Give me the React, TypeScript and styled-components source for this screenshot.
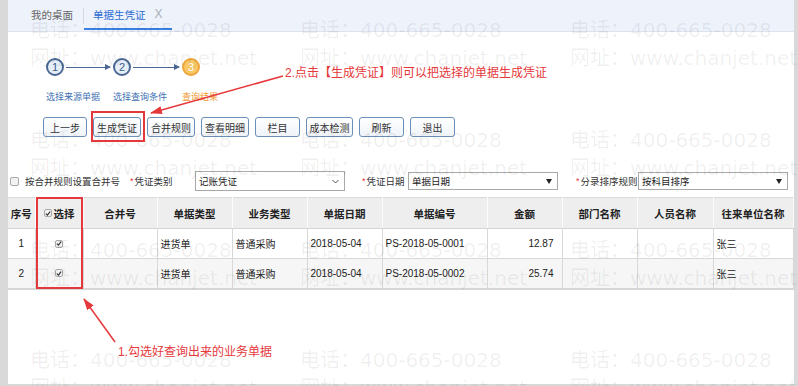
import React from "react";
import styled, { createGlobalStyle } from "styled-components";

const GlobalStyle = createGlobalStyle`
  html, body { margin: 0; padding: 0; background: #fff; }
  body { font-family: "Liberation Sans", "Noto Sans CJK SC", sans-serif; }
  * { box-sizing: border-box; }
`;

const FONT = `"Liberation Sans", "Noto Sans CJK SC", sans-serif`;
const RED = "#e5383b";

const Page = styled.div`
  position: relative;
  width: 798px;
  height: 386px;
  background: #d9d9d9;
  padding: 0 5px 2px 8px;
  display: flex;
  overflow: hidden;
`;

const Main = styled.div`
  flex: 1;
  background: #fff;
  display: flex;
  flex-direction: column;
  font-family: ${FONT};
`;

/* ---------- tab bar ---------- */
const TabBar = styled.div`
  height: 32px;
  flex: none;
  background: #edf2fb;
  border-bottom: 1px solid #dde4ef;
  display: flex;
  align-items: stretch;
  padding-left: 23px;
`;

const Tab = styled.div<{ $active?: boolean }>`
  display: flex;
  align-items: center;
  gap: 9px;
  font-size: 10.5px;
  color: ${(p) => (p.$active ? "#2c6cd2" : "#666")};
  padding: ${(p) => (p.$active ? "0 9px" : "0 10px 0 0")};
  border-bottom: 2px solid ${(p) => (p.$active ? "#3b7fe2" : "transparent")};
  margin-bottom: 1px;
  white-space: nowrap;
`;

const TabSep = styled.div`
  width: 1px;
  height: 16px;
  align-self: center;
  background: #d2d9e4;
`;

const TabClose = styled.span`
  font-size: 12px;
  color: #aab0ba;
  font-family: "Liberation Sans", sans-serif;
`;

/* ---------- steps ---------- */
const StepRow = styled.div`
  display: flex;
  padding: 26px 0 0 38px;
`;

const StepItem = styled.div<{ $w: number }>`
  width: ${(p) => p.$w}px;
  display: flex;
  flex-direction: column;
  gap: 14px;
`;

const StepHead = styled.div`
  display: flex;
  align-items: center;
  height: 18px;
`;

const Circle = styled.div<{ $current?: boolean }>`
  width: 18px;
  height: 18px;
  flex: none;
  border-radius: 50%;
  border: 2px solid ${(p) => (p.$current ? "#eea63c" : "#4a6794")};
  background: ${(p) => (p.$current ? "#f8c867" : "#e6eef8")};
  color: ${(p) => (p.$current ? "#fff" : "#3d5c8c")};
  font: 11px/14px "Liberation Sans", sans-serif;
  text-align: center;
`;

const Connector = styled.div`
  flex: 1;
  height: 1px;
  background: #4a6794;
  margin: 0 3px 0 2px;
  position: relative;
  &::after {
    content: "";
    position: absolute;
    right: -1px;
    top: -3px;
    border-left: 6px solid #4a6794;
    border-top: 3.5px solid transparent;
    border-bottom: 3.5px solid transparent;
  }
`;

const StepLabel = styled.div<{ $current?: boolean }>`
  font-size: 9px;
  line-height: 14px;
  color: ${(p) => (p.$current ? "#f0982e" : "#3e70b2")};
  white-space: nowrap;
`;

/* ---------- toolbar ---------- */
const Toolbar = styled.div`
  display: flex;
  gap: 6px;
  margin-top: 13px;
  padding-left: 35px;
`;

const ToolButton = styled.button<{ $w: number }>`
  width: ${(p) => p.$w}px;
  height: 20px;
  padding: 0;
  border: 1px solid #6a90b8;
  border-radius: 3px;
  background: linear-gradient(#ffffff, #eff3f8);
  font: 10px ${FONT};
  color: #333;
`;

/* ---------- filter row ---------- */
const FilterRow = styled.div`
  display: grid;
  grid-template-columns: 15px 105px 67px 150px 63px 150px 80px 150px;
  align-items: center;
  height: 20px;
  margin-top: 34px;
  font-size: 9.5px;
  color: #333;
`;

const BoxCheck = styled.span<{ $size: number; $ml?: number }>`
  display: inline-flex;
  align-items: center;
  justify-content: center;
  width: ${(p) => p.$size}px;
  height: ${(p) => p.$size}px;
  margin-left: ${(p) => p.$ml ?? 0}px;
  border: 1px solid #a8a8a8;
  border-radius: 2px;
  background: #f2f2f2;
  flex: none;
`;

const FieldLabel = styled.div<{ $pl: number }>`
  padding-left: ${(p) => p.$pl}px;
  white-space: nowrap;
`;

const Star = styled.span`
  color: ${RED};
  margin-right: 1px;
  font-size: 9px;
  position: relative;
  top: -1px;
`;

const SelectBox = styled.div<{ $h: number }>`
  height: ${(p) => p.$h}px;
  border: 1px solid #a9a9a9;
  background: #fff;
  display: flex;
  align-items: center;
  justify-content: space-between;
  padding: 0 5px 0 3px;
  font-size: 9.5px;
  color: #222;
`;

const Caret = styled.span`
  width: 0;
  height: 0;
  border-left: 3px solid transparent;
  border-right: 3px solid transparent;
  border-top: 5px solid #222;
`;

/* ---------- table ---------- */
const Grid = styled.table`
  margin-top: 6px;
  width: 785px;
  table-layout: fixed;
  border-collapse: collapse;
  font-size: 10px;
  color: #222;
  border-bottom: 2px solid #d6d6d6;
`;

const HeadCell = styled.th`
  height: 31px;
  background: #eeeeee;
  border-top: 1px solid #dadada;
  border-right: 1px solid #fbfbfb;
  border-bottom: 1px solid #d4d4d4;
  font-size: 10.5px;
  font-weight: 600;
  color: #222;
  text-align: center;
  padding: 0;
  white-space: nowrap;
`;

const HeadInner = styled.span`
  display: inline-flex;
  align-items: center;
  gap: 2px;
`;

const BodyRow = styled.tr<{ $alt?: boolean }>`
  background: ${(p) => (p.$alt ? "#f6f6f6" : "#fff")};
`;

const Cell = styled.td<{ $align?: "left" | "right" | "center" }>`
  height: 30px;
  border-bottom: 1px solid #d8d8d8;
  border-right: 1px solid #d8d8d8;
  text-align: ${(p) => p.$align ?? "left"};
  padding: ${(p) => (p.$align === "right" ? "0 8px 0 0" : p.$align === "center" ? "0" : "0 0 0 3px")};
  white-space: nowrap;
  vertical-align: middle;
`;

/* ---------- overlays ---------- */
const WatermarkLayer = styled.div`
  position: absolute;
  inset: 0;
  pointer-events: none;
  overflow: hidden;
  display: grid;
  grid-template-columns: repeat(3, 270px);
  grid-auto-rows: 110px;
  padding: 16px 0 0 30px;
`;

const WatermarkBlock = styled.div`
  font: 20px/28px "DejaVu Sans", "Noto Sans CJK SC", sans-serif;
  color: rgba(0, 0, 0, 0.065);
  white-space: nowrap;
`;

const RedBox = styled.div<{ $x: number; $y: number; $w: number; $h: number }>`
  position: absolute;
  left: ${(p) => p.$x}px;
  top: ${(p) => p.$y}px;
  width: ${(p) => p.$w}px;
  height: ${(p) => p.$h}px;
  border: 2px solid ${RED};
  pointer-events: none;
`;

const Note = styled.div<{ $x: number; $y: number }>`
  position: absolute;
  left: ${(p) => p.$x}px;
  top: ${(p) => p.$y}px;
  font: 12px/16px ${FONT};
  color: ${RED};
  white-space: nowrap;
`;

const ArrowLayer = styled.svg`
  position: absolute;
  left: 0;
  top: 0;
  pointer-events: none;
`;

const Check = () => (
  <svg width="7" height="7" viewBox="0 0 7 7">
    <path d="M1 3.6 L2.8 5.4 L6 1.3" fill="none" stroke="#333" strokeWidth="1.3" />
  </svg>
);

const Chevron = () => (
  <svg width="7" height="5" viewBox="0 0 7 5">
    <path d="M0.5 1 L3.5 4 L6.5 1" fill="none" stroke="#555" strokeWidth="1" />
  </svg>
);

const steps = [
  { n: 1, label: "选择来源单据", w: 67 },
  { n: 2, label: "选择查询条件", w: 69 },
  { n: 3, label: "查询结果", w: 60, current: true },
];

const buttons: [string, number][] = [
  ["上一步", 44],
  ["生成凭证", 48],
  ["合并规则", 48],
  ["查看明细", 48],
  ["栏目", 45],
  ["成本检测", 47],
  ["刷新", 45],
  ["退出", 45],
];

const cols: [string, number][] = [
  ["序号", 27],
  ["选择", 48],
  ["合并号", 74],
  ["单据类型", 75],
  ["业务类型", 75],
  ["单据日期", 75],
  ["单据编号", 105],
  ["金额", 75],
  ["部门名称", 75],
  ["人员名称", 76],
  ["往来单位名称", 80],
];

const rows = [
  { no: 1, type: "进货单", biz: "普通采购", date: "2018-05-04", code: "PS-2018-05-0001", amt: "12.87", partner: "张三" },
  { no: 2, type: "进货单", biz: "普通采购", date: "2018-05-04", code: "PS-2018-05-0002", amt: "25.74", partner: "张三" },
];

export default function App() {
  return (
    <>
      <GlobalStyle />
      <Page>
        <Main>
          <TabBar>
            <Tab>我的桌面</Tab>
            <TabSep />
            <Tab $active>
              单据生凭证
              <TabClose>X</TabClose>
            </Tab>
          </TabBar>

          <StepRow>
            {steps.map((s, i) => (
              <StepItem key={s.n} $w={s.w}>
                <StepHead>
                  <Circle $current={s.current}>{s.n}</Circle>
                  {i < steps.length - 1 && <Connector />}
                </StepHead>
                <StepLabel $current={s.current}>{s.label}</StepLabel>
              </StepItem>
            ))}
          </StepRow>

          <Toolbar>
            {buttons.map(([t, w]) => (
              <ToolButton key={t} $w={w}>
                {t}
              </ToolButton>
            ))}
          </Toolbar>

          <FilterRow>
            <BoxCheck $size={9} $ml={2} />
            <FieldLabel $pl={2}>按合并规则设置合并号</FieldLabel>
            <FieldLabel $pl={2}>
              <Star>*</Star>凭证类别
            </FieldLabel>
            <SelectBox $h={20}>
              记账凭证
              <Chevron />
            </SelectBox>
            <FieldLabel $pl={17}>
              <Star>*</Star>凭证日期
            </FieldLabel>
            <SelectBox $h={18}>
              单据日期
              <Caret />
            </SelectBox>
            <FieldLabel $pl={18}>
              <Star>*</Star>分录排序规则
            </FieldLabel>
            <SelectBox $h={18}>
              按科目排序
              <Caret />
            </SelectBox>
          </FilterRow>

          <Grid>
            <colgroup>
              {cols.map(([c, w]) => (
                <col key={c} style={{ width: w }} />
              ))}
            </colgroup>
            <thead>
              <tr>
                {cols.map(([c]) => (
                  <HeadCell key={c}>
                    {c === "选择" ? (
                      <HeadInner>
                        <BoxCheck $size={8}>
                          <Check />
                        </BoxCheck>
                        {c}
                      </HeadInner>
                    ) : (
                      c
                    )}
                  </HeadCell>
                ))}
              </tr>
            </thead>
            <tbody>
              {rows.map((r, i) => (
                <BodyRow key={r.no} $alt={i % 2 === 1}>
                  <Cell $align="center">{r.no}</Cell>
                  <Cell $align="center">
                    <BoxCheck $size={8}>
                      <Check />
                    </BoxCheck>
                  </Cell>
                  <Cell />
                  <Cell>{r.type}</Cell>
                  <Cell>{r.biz}</Cell>
                  <Cell>{r.date}</Cell>
                  <Cell>{r.code}</Cell>
                  <Cell $align="right">{r.amt}</Cell>
                  <Cell />
                  <Cell />
                  <Cell>{r.partner}</Cell>
                </BodyRow>
              ))}
            </tbody>
          </Grid>
        </Main>

        <WatermarkLayer>
          {Array.from({ length: 12 }).map((_, i) => (
            <WatermarkBlock key={i}>
              <div>电话：400-665-0028</div>
              <div>网址：www.chanjet.net</div>
            </WatermarkBlock>
          ))}
        </WatermarkLayer>

        <RedBox $x={91} $y={111} $w={54} $h={31} />
        <RedBox $x={36} $y={197} $w={47} $h={92} />

        <ArrowLayer width="798" height="386" viewBox="0 0 798 386">
          <defs>
            <marker id="ah" markerWidth="12" markerHeight="8" refX="11" refY="4" orient="auto" markerUnits="userSpaceOnUse">
              <path d="M0,0 L12,4 L0,8 Z" fill={RED} />
            </marker>
          </defs>
          <line x1="283" y1="76" x2="151" y2="113" stroke={RED} strokeWidth="1.5" markerEnd="url(#ah)" />
          <line x1="115" y1="342" x2="84" y2="299" stroke={RED} strokeWidth="1.5" markerEnd="url(#ah)" />
        </ArrowLayer>

        <Note $x={285} $y={65}>2.点击【生成凭证】则可以把选择的单据生成凭证</Note>
        <Note $x={118} $y={344}>1.勾选好查询出来的业务单据</Note>
      </Page>
    </>
  );
}
